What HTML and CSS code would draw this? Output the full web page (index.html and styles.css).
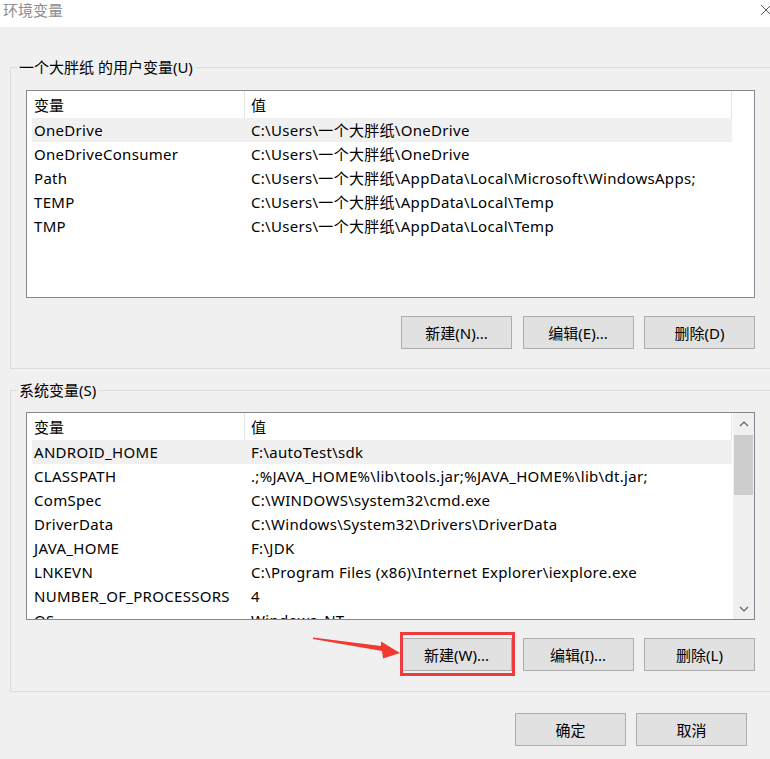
FILE: index.html
```html
<!DOCTYPE html>
<html lang="zh-CN">
<head>
<meta charset="utf-8">
<title>环境变量</title>
<link rel="stylesheet" href="styles.css">
</head>
<body>
<div class="window">
  <div class="titlebar">
    <span class="title">环境变量</span>
    <svg class="close" width="14" height="12" viewBox="0 0 14 12"><path d="M1 1 L11 11 M11 1 L1 11" stroke="#5a5a5a" stroke-width="1" fill="none"/></svg>
  </div>

  <fieldset class="group group-user">
    <legend>一个大胖纸 的用户变量(U)</legend>
    <div class="list">
      <div class="list-main">
        <div class="list-head"><div class="hcell hname">变量</div><div class="hcell hval">值</div></div>
        <div class="row selected"><div class="cname">OneDrive</div><div class="cval">C:\Users\一个大胖纸\OneDrive</div></div>
        <div class="row"><div class="cname">OneDriveConsumer</div><div class="cval">C:\Users\一个大胖纸\OneDrive</div></div>
        <div class="row"><div class="cname">Path</div><div class="cval">C:\Users\一个大胖纸\AppData\Local\Microsoft\WindowsApps;</div></div>
        <div class="row"><div class="cname">TEMP</div><div class="cval">C:\Users\一个大胖纸\AppData\Local\Temp</div></div>
        <div class="row"><div class="cname">TMP</div><div class="cval">C:\Users\一个大胖纸\AppData\Local\Temp</div></div>
      </div>
    </div>
    <div class="btn-row">
      <button class="btn">新建(N)...</button>
      <button class="btn">编辑(E)...</button>
      <button class="btn">删除(D)</button>
    </div>
  </fieldset>

  <fieldset class="group group-sys">
    <legend>系统变量(S)</legend>
    <div class="list">
      <div class="list-main">
        <div class="list-head"><div class="hcell hname">变量</div><div class="hcell hval">值</div></div>
        <div class="row selected"><div class="cname">ANDROID_HOME</div><div class="cval">F:\autoTest\sdk</div></div>
        <div class="row"><div class="cname">CLASSPATH</div><div class="cval">.;%JAVA_HOME%\lib\tools.jar;%JAVA_HOME%\lib\dt.jar;</div></div>
        <div class="row"><div class="cname">ComSpec</div><div class="cval">C:\WINDOWS\system32\cmd.exe</div></div>
        <div class="row"><div class="cname">DriverData</div><div class="cval">C:\Windows\System32\Drivers\DriverData</div></div>
        <div class="row"><div class="cname">JAVA_HOME</div><div class="cval">F:\JDK</div></div>
        <div class="row"><div class="cname">LNKEVN</div><div class="cval">C:\Program Files (x86)\Internet Explorer\iexplore.exe</div></div>
        <div class="row"><div class="cname">NUMBER_OF_PROCESSORS</div><div class="cval">4</div></div>
        <div class="row"><div class="cname">OS</div><div class="cval">Windows_NT</div></div>
      </div>
      <div class="scrollbar">
        <div class="sb-arrow"><svg width="10" height="6" viewBox="0 0 10 6"><path d="M1 5 L5 1 L9 5" stroke="#606060" stroke-width="1.2" fill="none"/></svg></div>
        <div class="sb-track"><div class="sb-thumb"></div></div>
        <div class="sb-arrow"><svg width="10" height="6" viewBox="0 0 10 6"><path d="M1 1 L5 5 L9 1" stroke="#606060" stroke-width="1.2" fill="none"/></svg></div>
      </div>
    </div>
    <div class="btn-row">
      <button class="btn">新建(W)...</button>
      <button class="btn">编辑(I)...</button>
      <button class="btn">删除(L)</button>
    </div>
  </fieldset>

  <div class="dialog-buttons">
    <button class="btn">确定</button>
    <button class="btn">取消</button>
  </div>

  <div class="mark-box"></div>
  <svg class="mark-arrow" width="110" height="50" viewBox="300 620 110 50">
    <polygon points="313,637.5 381,646 381,641.5 400,653 383,658.5 382,651 313,639" fill="#f0392f"/>
  </svg>
</div>
</body>
</html>
```

FILE: styles.css
```css
* { box-sizing: border-box; }

html, body {
  margin: 0;
  padding: 0;
  background: #f0f0f0;
}

body {
  width: 770px;
  height: 759px;
  overflow: hidden;
  font-family: "Noto Sans", "Noto Sans CJK SC", sans-serif;
  font-size: 15px;
  color: #000;
}

.window {
  position: relative;
  width: 770px;
  height: 759px;
  overflow: hidden;
}

.titlebar {
  height: 27px;
  background: #fff;
  display: flex;
  align-items: center;
  padding-left: 3px;
}

.title {
  color: #8e8e8e;
  font-size: 15px;
  line-height: 20px;
  margin-top: -7px;
}

.close {
  margin-left: auto;
  margin-right: -4px;
  margin-top: -8px;
}

.group {
  margin: 0 0 0 10px;
  width: 790px;
  min-width: 0;
  border: 1px solid #dcdcdc;
  padding: 0 0 0 15px;
}

.group legend {
  margin-left: -9px;
  padding: 0 2px;
  line-height: 20px;
  font-size: 15px;
}

.group-user {
  margin-top: 30px;
  padding-top: 13px;
  padding-bottom: 19px;
}

.group-sys {
  margin-top: 11px;
  padding-top: 12px;
  padding-bottom: 20px;
}

.list {
  width: 729px;
  height: 208px;
  border: 1px solid #828790;
  background: #fff;
  display: flex;
  overflow: hidden;
}

.list-main {
  width: 700px;
  margin-left: 5px;
  flex: none;
}

.list-head {
  display: flex;
  height: 27px;
  border-right: 1px solid #e5e5e5;
}

.hcell {
  padding-top: 2px;
  line-height: 25px;
}

.hname {
  width: 213px;
  padding-left: 2px;
  border-right: 1px solid #e5e5e5;
}

.hval {
  padding-left: 6px;
}

.row {
  display: flex;
  height: 24px;
  line-height: 24px;
  white-space: nowrap;
  letter-spacing: 0.3px;
}

.row.selected {
  background: #f0f0f0;
}

.cname {
  width: 219px;
  padding-left: 2px;
  flex: none;
}

.cval {
  flex: none;
}

.scrollbar {
  margin-left: auto;
  width: 21px;
  background: #f0f0f0;
  display: flex;
  flex-direction: column;
}

.sb-arrow {
  height: 21px;
  display: flex;
  align-items: center;
  justify-content: center;
  flex: none;
}

.sb-track {
  flex: 1;
  padding: 1px 1px 0 1px;
}

.sb-thumb {
  height: 60px;
  background: #cdcdcd;
}

.btn-row {
  width: 729px;
  margin-top: 18px;
  display: flex;
  justify-content: flex-end;
  gap: 10.5px;
}

.btn {
  width: 111px;
  height: 33px;
  background: #e1e1e1;
  border: 1px solid #adadad;
  font-family: inherit;
  font-size: 15px;
  color: #000;
  padding: 0;
}

.dialog-buttons {
  margin-top: 21px;
  padding-right: 23px;
  display: flex;
  justify-content: flex-end;
  gap: 10px;
}

.mark-box {
  position: absolute;
  left: 400px;
  top: 632px;
  width: 115px;
  height: 44px;
  border: 3px solid #ef3b3b;
}

.mark-arrow {
  position: absolute;
  left: 300px;
  top: 620px;
}
```
